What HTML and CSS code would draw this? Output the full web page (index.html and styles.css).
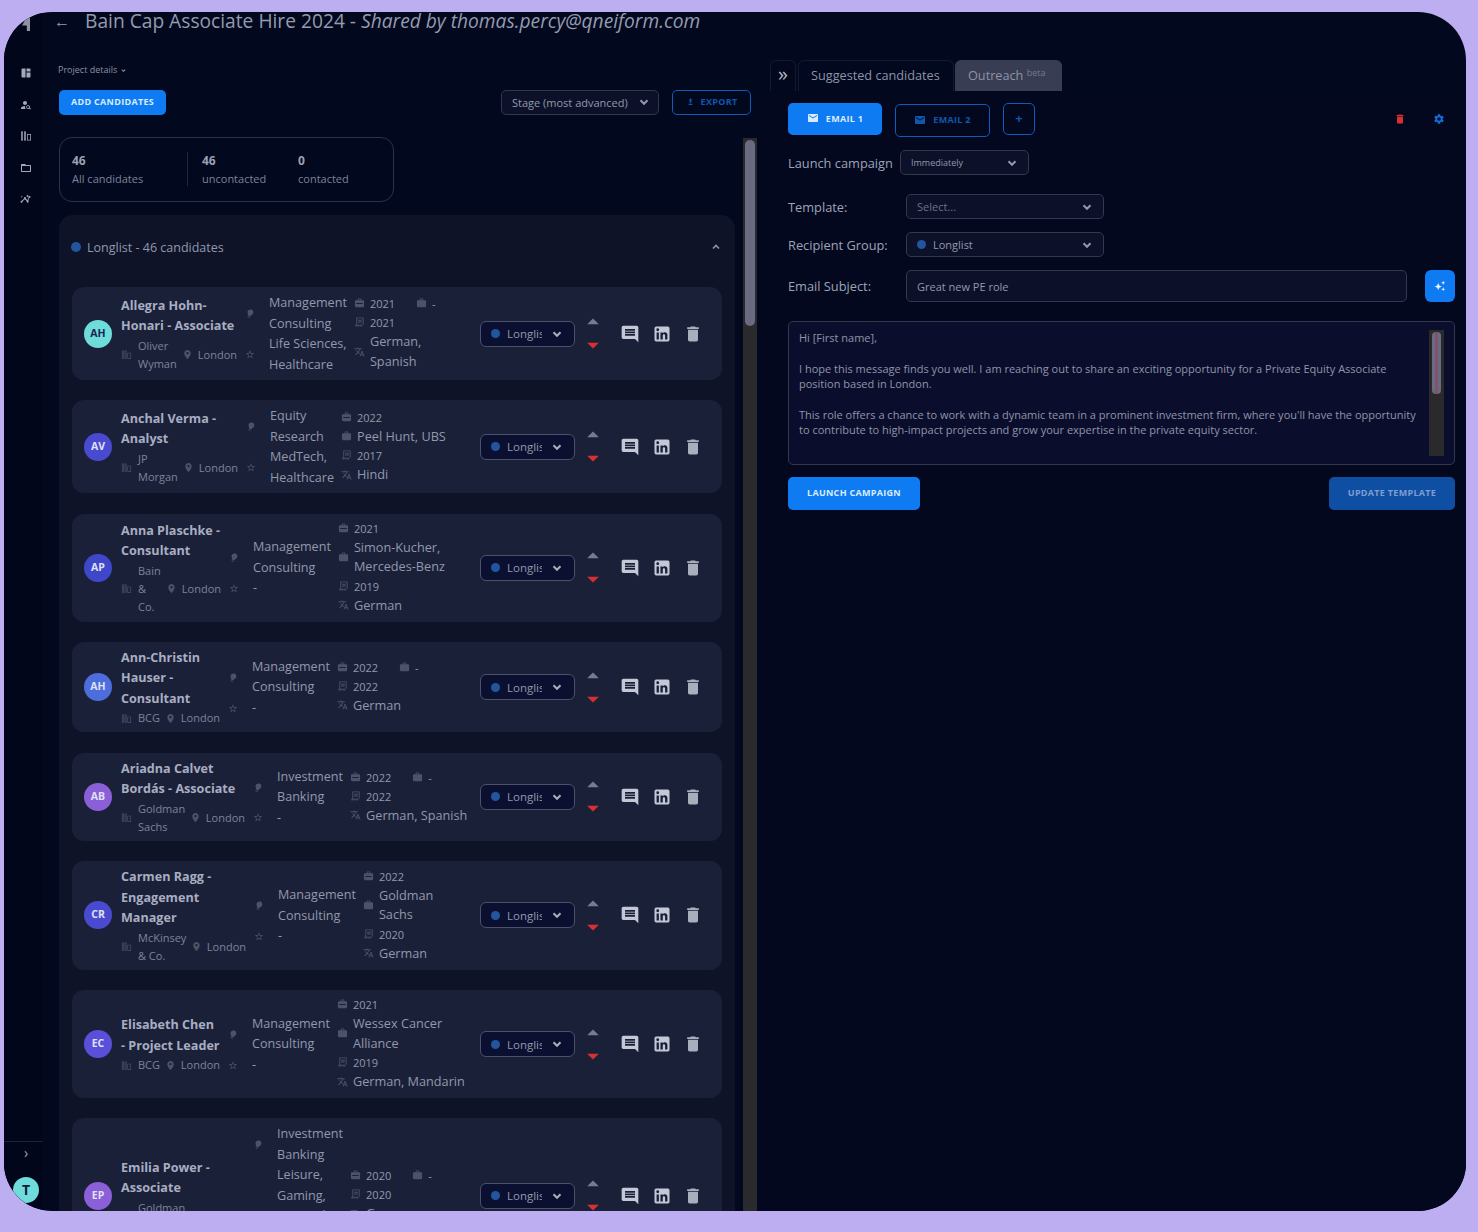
FILE: index.html
```html
<!DOCTYPE html>
<html lang="en">
<head>
<meta charset="utf-8">
<title>Bain Cap Associate Hire 2024</title>
<link rel="stylesheet" href="styles.css">
</head>
<body>
<svg class="defs" aria-hidden="true">
  <symbol id="i-dash" viewBox="0 0 24 24"><path d="M3 5a2 2 0 0 1 2-2h6v18H5a2 2 0 0 1-2-2zM13 3h6a2 2 0 0 1 2 2v4h-8zM13 11h8v8a2 2 0 0 1-2 2h-6z"/></symbol>
  <symbol id="i-person" viewBox="0 0 24 24"><path d="M10 12c2.2 0 4-1.8 4-4s-1.800-4-4-4-4 1.800-4 4 1.800 4 4 4zM10.350 14.010C7.620 13.910 2 15.270 2 18v2h9.540c-2.470-2.760-1.230-5.890-1.190-5.990zM19.430 18.020c.47-.8.7-1.770.52-2.810-.27-1.550-1.570-2.790-3.140-2.950-2.500-.27-4.600 1.830-4.340 4.330.16 1.570 1.400 2.870 2.950 3.140 1.040.18 2.010-.05 2.810-.52L20.590 21 22 19.590l-2.570-2.570zM16 18c-1.100 0-2-.9-2-2s.9-2 2-2 2 .9 2 2-.9 2-2 2z"/></symbol>
  <symbol id="i-org" viewBox="0 0 24 24"><path d="M2 3h4v18H2zM3.500 4.500v15h1v-15zM8 3h4v18H8zM9.500 4.500v15h1v-15zM14 8h8v13h-8zM15.500 9.500v10h5v-10z" fill-rule="evenodd"/></symbol>
  <symbol id="i-folder" viewBox="0 0 24 24"><path d="M20 6h-8l-2-2H4c-1.100 0-2 .9-2 2v12c0 1.100.9 2 2 2h16c1.100 0 2-.9 2-2V8c0-1.100-.9-2-2-2zm0 12H4V8h16v10z"/></symbol>
  <symbol id="i-insight" viewBox="0 0 24 24"><path d="M21 8a2 2 0 1 1-1.500-1.900 2 2 0 0 1 1.500 1.900zM15 14.300 11.700 11a2 2 0 1 0-3.400 0L3.500 15.700a2 2 0 1 0 1.400 1.400L9.700 12.400 13.600 16.300a2 2 0 1 0 3.300-.1L17.900 9.300a2 2 0 0 1-1-1zM15 9l.9-2L18 6l-2.100-1L15 3l-.9 2L12 6l2.100 1zM3.500 10 4 8l2-.5L4 7l-.5-2L3 7 1 7.500 3 8z"/></symbol>
  <symbol id="i-pin" viewBox="0 0 24 24"><path d="M12 2C8.130 2 5 5.130 5 9c0 5.250 7 13 7 13s7-7.750 7-13c0-3.870-3.130-7-7-7zm0 9.500A2.500 2.500 0 1 1 12 6.500a2.500 2.500 0 0 1 0 5z"/></symbol>
  <symbol id="i-star" viewBox="0 0 24 24"><path d="M22 9.240l-7.190-.62L12 2 9.190 8.630 2 9.240l5.460 4.730L5.820 21 12 17.270 18.180 21l-1.630-7.030L22 9.240zM12 15.400l-3.760 2.270 1-4.280-3.320-2.880 4.380-.38L12 6.100l1.710 4.040 4.380.38-3.320 2.880 1 4.280L12 15.400z"/></symbol>
  <symbol id="i-bulb" viewBox="0 0 24 24"><path transform="rotate(20 12 12)" d="M9 21c0 .55.45 1 1 1h4c.55 0 1-.45 1-1v-1H9v1zm3-19C8.140 2 5 5.140 5 9c0 2.380 1.190 4.470 3 5.740V17c0 .55.45 1 1 1h6c.55 0 1-.45 1-1v-2.260c1.810-1.270 3-3.360 3-5.740 0-3.860-3.140-7-7-7z"/></symbol>
  <symbol id="i-case" viewBox="0 0 24 24"><path d="M20 6h-4V4c0-1.110-.89-2-2-2h-4c-1.110 0-2 .89-2 2v2H4c-1.110 0-2 .89-2 2v11c0 1.110.89 2 2 2h16c1.110 0 2-.89 2-2V8c0-1.110-.89-2-2-2zm-6 0h-4V4h4v2zM5 12v2h14v-2z" fill-rule="evenodd"/></symbol>
  <symbol id="i-bag" viewBox="0 0 24 24"><path d="M20 6h-4V4c0-1.110-.89-2-2-2h-4c-1.110 0-2 .89-2 2v2H4c-1.110 0-2 .89-2 2v11c0 1.110.89 2 2 2h16c1.110 0 2-.89 2-2V8c0-1.110-.89-2-2-2zm-6 0h-4V4h4v2z"/></symbol>
  <symbol id="i-doc" viewBox="0 0 24 24"><path d="M5 2h16v16h-3v4H3v-4h2zM7 4v14h9v2H5v1h11v-3h3V4zM9 7h8v2H9zM9 11h8v2H9z" fill-rule="evenodd"/></symbol>
  <symbol id="i-lang" viewBox="0 0 24 24"><path d="M12.870 15.070l-2.540-2.510.03-.03c1.740-1.940 2.980-4.170 3.710-6.530H17V4h-7V2H8v2H1v1.990h11.170C11.500 7.920 10.440 9.750 9 11.350 8.070 10.320 7.300 9.190 6.690 8h-2c.73 1.630 1.730 3.170 2.980 4.560l-5.090 5.020L4 19l5-5 3.110 3.110.76-2.040zM18.500 10h-2L12 22h2l1.120-3h4.750L21 22h2l-4.500-12zm-2.620 7l1.620-4.330L19.120 17h-3.240z"/></symbol>
  <symbol id="i-comment" viewBox="0 0 24 24"><path d="M21.990 4c0-1.100-.89-2-1.990-2H4c-1.100 0-2 .9-2 2v12c0 1.100.9 2 2 2h14l4 4-.01-18zM18 14H6v-2h12v2zm0-3H6V9h12v2zm0-3H6V6h12v2z"/></symbol>
  <symbol id="i-in" viewBox="0 0 24 24"><path d="M19 3a2 2 0 0 1 2 2v14a2 2 0 0 1-2 2H5a2 2 0 0 1-2-2V5a2 2 0 0 1 2-2h14m-.5 15.500v-5.300a3.260 3.260 0 0 0-3.260-3.260c-.85 0-1.840.52-2.320 1.300v-1.110h-2.790v8.370h2.790v-4.930c0-.77.62-1.400 1.390-1.400a1.400 1.400 0 0 1 1.400 1.400v4.930h2.790M6.880 8.560a1.680 1.680 0 0 0 1.680-1.680c0-.93-.75-1.690-1.680-1.690a1.690 1.690 0 0 0-1.690 1.690c0 .93.76 1.680 1.690 1.680m1.390 9.940v-8.370H5.500v8.370h2.770z"/></symbol>
  <symbol id="i-trash" viewBox="0 0 24 24"><path d="M6 19c0 1.100.9 2 2 2h8c1.100 0 2-.9 2-2V7H6v12zM19 4h-3.500l-1-1h-5l-1 1H5v2h14V4z"/></symbol>
  <symbol id="i-mail" viewBox="0 0 24 24"><path d="M20 4H4c-1.100 0-2 .9-2 2v12c0 1.100.9 2 2 2h16c1.100 0 2-.9 2-2V6c0-1.100-.9-2-2-2zm0 4l-8 5-8-5V6l8 5 8-5v2z"/></symbol>
  <symbol id="i-gear" viewBox="0 0 24 24"><path d="M19.140 12.940c.04-.3.06-.61.06-.94 0-.32-.02-.64-.07-.94l2.030-1.580c.18-.14.23-.41.12-.61l-1.920-3.320c-.12-.22-.37-.29-.59-.22l-2.390.96c-.5-.38-1.030-.7-1.620-.94l-.36-2.540c-.04-.24-.24-.41-.48-.41h-3.840c-.24 0-.43.17-.47.41l-.36 2.540c-.59.24-1.130.57-1.620.94l-2.390-.96c-.22-.08-.47 0-.59.22L2.740 8.870c-.12.21-.08.47.12.61l2.030 1.580c-.05.3-.09.63-.09.94s.02.64.07.94l-2.030 1.580c-.18.14-.23.41-.12.61l1.920 3.320c.12.22.37.29.59.22l2.390-.96c.5.38 1.030.7 1.620.94l.36 2.540c.05.24.24.41.48.41h3.840c.24 0 .44-.17.47-.41l.36-2.540c.59-.24 1.130-.56 1.620-.94l2.390.96c.22.08.47 0 .59-.22l1.920-3.320c.12-.22.07-.47-.12-.61l-2.010-1.580zM12 15.600a3.600 3.600 0 1 1 0-7.200 3.600 3.600 0 0 1 0 7.200z"/></symbol>
  <symbol id="i-spark" viewBox="0 0 24 24"><path d="M9 7l1.800 4.200L15 13l-4.200 1.800L9 19l-1.800-4.200L3 13l4.200-1.800zM17.500 3l1 2.500L21 6.500l-2.500 1-1 2.500-1-2.500-2.500-1 2.500-1zM17.500 14l1 2.500 2.500 1-2.500 1-1 2.500-1-2.500-2.500-1 2.500-1z"/></symbol>
  <symbol id="i-upload" viewBox="0 0 24 24"><path d="M12 3l5 6h-3v7h-4V9H7zM7 18h10v3H7z"/></symbol>
  <symbol id="i-chev" viewBox="0 0 24 24"><path d="M6 9l6 6 6-6" fill="none" stroke="currentColor" stroke-width="3.500"/></symbol>
  <symbol id="i-up" viewBox="0 0 24 24"><path d="M12 6l10 10H2z"/></symbol>
  <symbol id="i-down" viewBox="0 0 24 24"><path d="M12 18L2 8h20z"/></symbol>
</svg>

<div class="frame">
  <nav class="rail">
    <div class="rail-logo"></div>
    <ul class="rail-nav">
      <li><svg class="ic12"><use href="#i-dash"/></svg></li>
      <li><svg class="ic12"><use href="#i-person"/></svg></li>
      <li><svg class="ic12"><use href="#i-org"/></svg></li>
      <li><svg class="ic12"><use href="#i-folder"/></svg></li>
      <li><svg class="ic12"><use href="#i-insight"/></svg></li>
    </ul>
    <div class="rail-foot">
      <div class="rail-expand">&#8250;</div>
      <div class="rail-user">T</div>
    </div>
  </nav>

  <div class="main">
    <header class="titlebar">
      <span class="back">&#8592;</span>
      <h1 class="title">Bain Cap Associate Hire 2024 - <em>Shared by thomas.percy@qneiform.com</em></h1>
    </header>

    <div class="columns">
      <section class="left">
        <div class="details-link">Project details <svg class="ic7"><use href="#i-chev"/></svg></div>
        <div class="toolbar">
          <button class="btn btn-solid btn-add">ADD CANDIDATES</button>
          <div class="toolbar-right">
            <div class="sort">Stage (most advanced) <svg class="chev"><use href="#i-chev"/></svg></div>
            <button class="btn btn-outline btn-export"><svg class="ic9"><use href="#i-upload"/></svg> EXPORT</button>
          </div>
        </div>

        <div class="scroller">
          <div class="scroll-body">
            <div class="stats">
              <div class="stat stat-all"><b>46</b><span>All candidates</span></div>
              <div class="stat stat-un"><b>46</b><span>uncontacted</span></div>
              <div class="stat"><b>0</b><span>contacted</span></div>
            </div>

            <div class="group">
              <div class="group-head">
                <span class="dot dot-lg"></span>
                <span class="group-name">Longlist - 46 candidates</span>
                <svg class="chev group-chev"><use href="#i-chev"/></svg>
              </div>

              <article class="card">
                <div class="avatar av-teal">AH</div>
                <div class="who nw-118">
                  <div class="name">Allegra Hohn-Honari - Associate</div>
                  <div class="meta"><svg class="ic11 org"><use href="#i-org"/></svg><span class="company">Oliver Wyman</span><svg class="ic11"><use href="#i-pin"/></svg><span>London</span></div>
                </div>
                <div class="sector">
                  <svg class="ic11"><use href="#i-bulb"/></svg><div class="sector-text">Management Consulting</div>
                  <svg class="ic11"><use href="#i-star"/></svg><div class="sector-text">Life&nbsp;Sciences, Healthcare</div>
                </div>
                <div class="facts facts-narrow">
                  <div class="fact"><svg class="ic11"><use href="#i-case"/></svg><span class="yr">2021</span><svg class="ic11 fact-bag"><use href="#i-bag"/></svg><span class="yr">-</span></div>
                  <div class="fact"><svg class="ic11"><use href="#i-doc"/></svg><span class="yr">2021</span></div>
                  <div class="fact"><svg class="ic11"><use href="#i-lang"/></svg><span>German, Spanish</span></div>
                </div>
                <div class="actions">
                  <div class="stage"><span class="dot"></span><span class="stage-name">Longlist</span><svg class="chev"><use href="#i-chev"/></svg></div>
                  <div class="vote"><svg class="up"><use href="#i-up"/></svg><svg class="down"><use href="#i-down"/></svg></div>
                  <svg class="act act-c"><use href="#i-comment"/></svg>
                  <svg class="act act-l"><use href="#i-in"/></svg>
                  <svg class="act act-t"><use href="#i-trash"/></svg>
                </div>
              </article>

              <article class="card">
                <div class="avatar av-indigo">AV</div>
                <div class="who nw-119">
                  <div class="name">Anchal Verma - Analyst</div>
                  <div class="meta"><svg class="ic11 org"><use href="#i-org"/></svg><span class="company">JP Morgan</span><svg class="ic11"><use href="#i-pin"/></svg><span>London</span></div>
                </div>
                <div class="sector">
                  <svg class="ic11"><use href="#i-bulb"/></svg><div class="sector-text">Equity Research</div>
                  <svg class="ic11"><use href="#i-star"/></svg><div class="sector-text">MedTech, Healthcare</div>
                </div>
                <div class="facts">
                  <div class="fact"><svg class="ic11"><use href="#i-case"/></svg><span class="yr">2022</span></div>
                  <div class="fact"><svg class="ic11"><use href="#i-bag"/></svg><span>Peel Hunt, UBS</span></div>
                  <div class="fact"><svg class="ic11"><use href="#i-doc"/></svg><span class="yr">2017</span></div>
                  <div class="fact"><svg class="ic11"><use href="#i-lang"/></svg><span>Hindi</span></div>
                </div>
                <div class="actions">
                  <div class="stage"><span class="dot"></span><span class="stage-name">Longlist</span><svg class="chev"><use href="#i-chev"/></svg></div>
                  <div class="vote"><svg class="up"><use href="#i-up"/></svg><svg class="down"><use href="#i-down"/></svg></div>
                  <svg class="act act-c"><use href="#i-comment"/></svg>
                  <svg class="act act-l"><use href="#i-in"/></svg>
                  <svg class="act act-t"><use href="#i-trash"/></svg>
                </div>
              </article>

              <article class="card">
                <div class="avatar av-blue">AP</div>
                <div class="who nw-102">
                  <div class="name">Anna Plaschke - Consultant</div>
                  <div class="meta"><svg class="ic11 org"><use href="#i-org"/></svg><span class="company">Bain &amp; Co.</span><svg class="ic11"><use href="#i-pin"/></svg><span>London</span></div>
                </div>
                <div class="sector">
                  <svg class="ic11"><use href="#i-bulb"/></svg><div class="sector-text">Management Consulting</div>
                  <svg class="ic11"><use href="#i-star"/></svg><div class="sector-text">-</div>
                </div>
                <div class="facts">
                  <div class="fact"><svg class="ic11"><use href="#i-case"/></svg><span class="yr">2021</span></div>
                  <div class="fact"><svg class="ic11"><use href="#i-bag"/></svg><span>Simon-Kucher, Mercedes-Benz</span></div>
                  <div class="fact"><svg class="ic11"><use href="#i-doc"/></svg><span class="yr">2019</span></div>
                  <div class="fact"><svg class="ic11"><use href="#i-lang"/></svg><span>German</span></div>
                </div>
                <div class="actions">
                  <div class="stage"><span class="dot"></span><span class="stage-name">Longlist</span><svg class="chev"><use href="#i-chev"/></svg></div>
                  <div class="vote"><svg class="up"><use href="#i-up"/></svg><svg class="down"><use href="#i-down"/></svg></div>
                  <svg class="act act-c"><use href="#i-comment"/></svg>
                  <svg class="act act-l"><use href="#i-in"/></svg>
                  <svg class="act act-t"><use href="#i-trash"/></svg>
                </div>
              </article>

              <article class="card">
                <div class="avatar av-sky">AH</div>
                <div class="who nw-101">
                  <div class="name">Ann-Christin Hauser - Consultant</div>
                  <div class="meta"><svg class="ic11 org"><use href="#i-org"/></svg><span class="company">BCG</span><svg class="ic11"><use href="#i-pin"/></svg><span>London</span></div>
                </div>
                <div class="sector">
                  <svg class="ic11"><use href="#i-bulb"/></svg><div class="sector-text">Management Consulting</div>
                  <svg class="ic11"><use href="#i-star"/></svg><div class="sector-text">-</div>
                </div>
                <div class="facts">
                  <div class="fact"><svg class="ic11"><use href="#i-case"/></svg><span class="yr">2022</span><svg class="ic11 fact-bag"><use href="#i-bag"/></svg><span class="yr">-</span></div>
                  <div class="fact"><svg class="ic11"><use href="#i-doc"/></svg><span class="yr">2022</span></div>
                  <div class="fact"><svg class="ic11"><use href="#i-lang"/></svg><span>German</span></div>
                </div>
                <div class="actions">
                  <div class="stage"><span class="dot"></span><span class="stage-name">Longlist</span><svg class="chev"><use href="#i-chev"/></svg></div>
                  <div class="vote"><svg class="up"><use href="#i-up"/></svg><svg class="down"><use href="#i-down"/></svg></div>
                  <svg class="act act-c"><use href="#i-comment"/></svg>
                  <svg class="act act-l"><use href="#i-in"/></svg>
                  <svg class="act act-t"><use href="#i-trash"/></svg>
                </div>
              </article>

              <article class="card">
                <div class="avatar av-violet">AB</div>
                <div class="who nw-126">
                  <div class="name">Ariadna Calvet Bordás - Associate</div>
                  <div class="meta"><svg class="ic11 org"><use href="#i-org"/></svg><span class="company">Goldman Sachs</span><svg class="ic11"><use href="#i-pin"/></svg><span>London</span></div>
                </div>
                <div class="sector">
                  <svg class="ic11"><use href="#i-bulb"/></svg><div class="sector-text">Investment Banking</div>
                  <svg class="ic11"><use href="#i-star"/></svg><div class="sector-text">-</div>
                </div>
                <div class="facts">
                  <div class="fact"><svg class="ic11"><use href="#i-case"/></svg><span class="yr">2022</span><svg class="ic11 fact-bag"><use href="#i-bag"/></svg><span class="yr">-</span></div>
                  <div class="fact"><svg class="ic11"><use href="#i-doc"/></svg><span class="yr">2022</span></div>
                  <div class="fact"><svg class="ic11"><use href="#i-lang"/></svg><span>German, Spanish</span></div>
                </div>
                <div class="actions">
                  <div class="stage"><span class="dot"></span><span class="stage-name">Longlist</span><svg class="chev"><use href="#i-chev"/></svg></div>
                  <div class="vote"><svg class="up"><use href="#i-up"/></svg><svg class="down"><use href="#i-down"/></svg></div>
                  <svg class="act act-c"><use href="#i-comment"/></svg>
                  <svg class="act act-l"><use href="#i-in"/></svg>
                  <svg class="act act-t"><use href="#i-trash"/></svg>
                </div>
              </article>

              <article class="card">
                <div class="avatar av-indigo">CR</div>
                <div class="who nw-127">
                  <div class="name">Carmen Ragg - Engagement Manager</div>
                  <div class="meta"><svg class="ic11 org"><use href="#i-org"/></svg><span class="company">McKinsey &amp; Co.</span><svg class="ic11"><use href="#i-pin"/></svg><span>London</span></div>
                </div>
                <div class="sector">
                  <svg class="ic11"><use href="#i-bulb"/></svg><div class="sector-text">Management Consulting</div>
                  <svg class="ic11"><use href="#i-star"/></svg><div class="sector-text">-</div>
                </div>
                <div class="facts facts-narrow">
                  <div class="fact"><svg class="ic11"><use href="#i-case"/></svg><span class="yr">2022</span></div>
                  <div class="fact"><svg class="ic11"><use href="#i-bag"/></svg><span>Goldman Sachs</span></div>
                  <div class="fact"><svg class="ic11"><use href="#i-doc"/></svg><span class="yr">2020</span></div>
                  <div class="fact"><svg class="ic11"><use href="#i-lang"/></svg><span>German</span></div>
                </div>
                <div class="actions">
                  <div class="stage"><span class="dot"></span><span class="stage-name">Longlist</span><svg class="chev"><use href="#i-chev"/></svg></div>
                  <div class="vote"><svg class="up"><use href="#i-up"/></svg><svg class="down"><use href="#i-down"/></svg></div>
                  <svg class="act act-c"><use href="#i-comment"/></svg>
                  <svg class="act act-l"><use href="#i-in"/></svg>
                  <svg class="act act-t"><use href="#i-trash"/></svg>
                </div>
              </article>

              <article class="card">
                <div class="avatar av-purple">EC</div>
                <div class="who nw-101">
                  <div class="name">Elisabeth Chen <span class="keep">- Project</span> Leader</div>
                  <div class="meta"><svg class="ic11 org"><use href="#i-org"/></svg><span class="company">BCG</span><svg class="ic11"><use href="#i-pin"/></svg><span>London</span></div>
                </div>
                <div class="sector">
                  <svg class="ic11"><use href="#i-bulb"/></svg><div class="sector-text">Management Consulting</div>
                  <svg class="ic11"><use href="#i-star"/></svg><div class="sector-text">-</div>
                </div>
                <div class="facts">
                  <div class="fact"><svg class="ic11"><use href="#i-case"/></svg><span class="yr">2021</span></div>
                  <div class="fact"><svg class="ic11"><use href="#i-bag"/></svg><span>Wessex Cancer Alliance</span></div>
                  <div class="fact"><svg class="ic11"><use href="#i-doc"/></svg><span class="yr">2019</span></div>
                  <div class="fact"><svg class="ic11"><use href="#i-lang"/></svg><span>German, Mandarin</span></div>
                </div>
                <div class="actions">
                  <div class="stage"><span class="dot"></span><span class="stage-name">Longlist</span><svg class="chev"><use href="#i-chev"/></svg></div>
                  <div class="vote"><svg class="up"><use href="#i-up"/></svg><svg class="down"><use href="#i-down"/></svg></div>
                  <svg class="act act-c"><use href="#i-comment"/></svg>
                  <svg class="act act-l"><use href="#i-in"/></svg>
                  <svg class="act act-t"><use href="#i-trash"/></svg>
                </div>
              </article>

              <article class="card">
                <div class="avatar av-violet">EP</div>
                <div class="who nw-126">
                  <div class="name">Emilia Power - Associate</div>
                  <div class="meta"><svg class="ic11 org"><use href="#i-org"/></svg><span class="company">Goldman Sachs</span><svg class="ic11"><use href="#i-pin"/></svg><span>London</span></div>
                </div>
                <div class="sector">
                  <svg class="ic11"><use href="#i-bulb"/></svg><div class="sector-text">Investment Banking</div>
                  <svg class="ic11"><use href="#i-star"/></svg><div class="sector-text">Leisure, Gaming, Hospitality, Travel, Tourism</div>
                </div>
                <div class="facts">
                  <div class="fact"><svg class="ic11"><use href="#i-case"/></svg><span class="yr">2020</span><svg class="ic11 fact-bag"><use href="#i-bag"/></svg><span class="yr">-</span></div>
                  <div class="fact"><svg class="ic11"><use href="#i-doc"/></svg><span class="yr">2020</span></div>
                  <div class="fact"><svg class="ic11"><use href="#i-lang"/></svg><span>German</span></div>
                </div>
                <div class="actions">
                  <div class="stage"><span class="dot"></span><span class="stage-name">Longlist</span><svg class="chev"><use href="#i-chev"/></svg></div>
                  <div class="vote"><svg class="up"><use href="#i-up"/></svg><svg class="down"><use href="#i-down"/></svg></div>
                  <svg class="act act-c"><use href="#i-comment"/></svg>
                  <svg class="act act-l"><use href="#i-in"/></svg>
                  <svg class="act act-t"><use href="#i-trash"/></svg>
                </div>
              </article>
            </div>
          </div>
          <div class="scrollbar"><div class="thumb"></div></div>
        </div>
      </section>

      <section class="right">
        <div class="tabs">
          <div class="tab tab-toggle">&#187;</div>
          <div class="tab tab-suggested">Suggested candidates</div>
          <div class="tab tab-outreach">Outreach <sup>beta</sup></div>
        </div>
        <div class="panel">
          <div class="email-bar">
            <button class="btn btn-solid btn-email"><svg class="ic12"><use href="#i-mail"/></svg> EMAIL 1</button>
            <button class="btn btn-outline btn-email2"><svg class="ic12"><use href="#i-mail"/></svg> EMAIL 2</button>
            <button class="btn btn-outline btn-plus">+</button>
            <svg class="tool tool-del"><use href="#i-trash"/></svg>
            <svg class="tool tool-gear"><use href="#i-gear"/></svg>
          </div>
          <div class="launch-row">
            <label class="launch-label">Launch campaign</label>
            <div class="field field-launch"><span>Immediately</span><svg class="chev"><use href="#i-chev"/></svg></div>
          </div>
          <div class="form-row">
            <label class="form-label">Template:</label>
            <div class="field field-wide field-muted"><span>Select...</span><svg class="chev"><use href="#i-chev"/></svg></div>
          </div>
          <div class="form-row">
            <label class="form-label">Recipient Group:</label>
            <div class="field field-wide"><span class="field-group"><span class="dot"></span>Longlist</span><svg class="chev"><use href="#i-chev"/></svg></div>
          </div>
          <div class="form-row subject-row">
            <label class="form-label">Email Subject:</label>
            <div class="subject">Great new PE role</div>
            <button class="spark"><svg class="ic14"><use href="#i-spark"/></svg></button>
          </div>
          <div class="editor">
            <div class="editor-text">
              <p>Hi [First name],</p>
              <p>I hope this message finds you well. I am reaching out to share an exciting opportunity for a Private Equity Associate position based in London.</p>
              <p>This role offers a chance to work with a dynamic team in a prominent investment firm, where you'll have the opportunity to contribute to high-impact projects and grow your expertise in the private equity sector.</p>
            </div>
            <div class="editor-scroll"><div class="editor-thumb"></div></div>
          </div>
          <div class="panel-actions">
            <button class="btn btn-solid btn-launch">LAUNCH CAMPAIGN</button>
            <button class="btn btn-update">UPDATE TEMPLATE</button>
          </div>
        </div>
      </section>
    </div>
  </div>
</div>
</body>
</html>
```

FILE: styles.css
```css
* { box-sizing: border-box; }
html, body { margin: 0; padding: 0; }
body {
  width: 1478px;
  height: 1232px;
  overflow: hidden;
  background: #bcaef0;
  font-family: "Open Sans", "Noto Sans", sans-serif;
  color: #a3a9bc;
  padding: 12px 12px 21px 4px;
}
.defs { width: 0; height: 0; position: absolute; }
svg { fill: currentColor; flex: none; display: block; }
button { font-family: inherit; cursor: pointer; }
h1, p, ul { margin: 0; padding: 0; }
ul { list-style: none; }

.ic7 { width: 7px; height: 7px; display: inline-block; }
.ic9 { width: 9px; height: 9px; }
.ic11 { width: 11px; height: 11px; }
.ic12 { width: 12px; height: 12px; }
.ic14 { width: 14px; height: 14px; }
.chev { width: 14px; height: 14px; }

.frame {
  height: 1199px;
  width: 1462px;
  border-radius: 48px;
  overflow: hidden;
  background: #02081e;
  display: flex;
}

/* left rail */
.rail {
  width: 39px;
  flex: none;
  background: #01061a;
  display: flex;
  flex-direction: column;
  align-items: center;
  padding-left: 5px;
}
.rail-logo {
  width: 8px;
  height: 14px;
  margin-top: 5px;
  background: #8d91a0;
  clip-path: polygon(60% 0, 100% 0, 100% 100%, 60% 100%, 60% 60%, 0 60%);
}
.rail-nav {
  margin-top: 36px;
  display: flex;
  flex-direction: column;
  gap: 19.500px;
  color: #a4a9ba;
}
.rail-foot {
  margin-top: auto;
  width: 100%;
  display: flex;
  flex-direction: column;
  align-items: center;
}
.rail-expand {
  align-self: stretch;
  margin-left: -5px;
  padding-left: 5px;
  border-top: 1px solid #1d2236;
  text-align: center;
  font-size: 14px;
  line-height: 22px;
  color: #a3a9bc;
  height: 36px;
}
.rail-user {
  width: 26px;
  height: 26px;
  border-radius: 50%;
  background: #6fdcdc;
  color: #121a3a;
  font-size: 14px;
  font-weight: 700;
  line-height: 26px;
  text-align: center;
  margin-bottom: 8px;
}

.main {
  flex: 1;
  min-width: 0;
  display: flex;
  flex-direction: column;
}

.titlebar {
  height: 18px;
  display: flex;
  align-items: center;
  padding-left: 11px;
  color: #959bae;
}
.back { font-size: 16px; width: 31px; }
.title {
  font-size: 19.200px;
  font-weight: 400;
  line-height: 18px;
  white-space: nowrap;
  color: #959bae;
}

.columns { flex: 1; min-height: 0; display: flex; }

/* left column */
.left {
  width: 714px;
  flex: none;
  display: flex;
  flex-direction: column;
  padding-top: 34px;
}
.details-link {
  font-size: 9px;
  line-height: 12px;
  margin-left: 15px;
  color: #8b91a6;
  display: flex;
  align-items: center;
  gap: 3px;
}
.toolbar {
  margin-top: 14px;
  display: flex;
  justify-content: space-between;
  padding: 0 6px 0 16px;
}
.toolbar-right { display: flex; gap: 13px; }

.btn {
  border-radius: 5px;
  font-weight: 700;
  font-size: 9px;
  letter-spacing: .3px;
  display: flex;
  align-items: center;
  justify-content: center;
  padding: 0 0 2px;
  border: 1px solid transparent;
}
.btn-solid { background: #0f7bf2; color: #d8ecff; }
.btn-outline { background: transparent; border: 1.500px solid #0f5cba; color: #0f58ad; }
.btn-add { width: 107px; height: 25px; }
.btn-export { width: 79px; height: 25px; gap: 6px; }
.sort {
  width: 158px;
  height: 25px;
  border: 1px solid #33384f;
  border-radius: 5px;
  background: #0c1129;
  color: #9298ac;
  font-size: 11px;
  display: flex;
  align-items: center;
  justify-content: space-between;
  padding: 0 7px 1px 10px;
}

.scroller {
  margin-top: 22px;
  flex: 1;
  min-height: 0;
  display: flex;
  overflow: hidden;
  padding-left: 16px;
}
.scroll-body { width: 676px; flex: none; }
.scrollbar {
  width: 14px;
  margin-left: 8px;
  margin-top: 1px;
  background: #2a2a2c;
  padding: 2px 2px 0;
  flex: none;
}
.thumb {
  height: 186px;
  border-radius: 5px;
  background: linear-gradient(90deg, #676c83 40%, #77617a 50%, #676c83 60%);
}

.stats {
  width: 335px;
  height: 65px;
  border: 1px solid #2d3249;
  border-radius: 13px;
  display: flex;
  align-items: center;
  padding: 0 0 1px 12px;
}
.stat { display: flex; flex-direction: column; height: 34px; }
.stat b { font-size: 12px; line-height: 18px; color: #9aa0b3; }
.stat span { font-size: 11px; line-height: 17px; color: #7d8398; }
.stat-all { width: 116px; position: relative; margin-right: 14px; }
.stat-all::after {
  content: "";
  position: absolute;
  right: 0;
  top: 0;
  bottom: 0;
  width: 1px;
  background: #22273c;
}
.stat-un { width: 96px; }

.group {
  margin-top: 13px;
  background: #0e1328;
  border-radius: 14px;
  padding: 0 13px;
}
.group-head {
  height: 72px;
  display: flex;
  align-items: center;
  padding-bottom: 8px;
}
.dot { width: 9px; height: 9px; border-radius: 50%; background: #23559f; display: inline-block; flex: none; }
.dot-lg { width: 10px; height: 10px; margin-left: -1px; margin-right: 6px; }
.group-name { font-size: 12.500px; color: #9298ac; }
.group-chev { margin-left: auto; transform: rotate(180deg); color: #8b91a6; width: 12px; height: 12px; }

.card {
  background: #1b2039;
  border-radius: 12px;
  padding: 6px 0 5px 12px;
  margin-bottom: 20.400px;
  display: flex;
  align-items: center;
}
.avatar {
  width: 28px;
  height: 28px;
  border-radius: 50%;
  flex: none;
  font-size: 10.500px;
  font-weight: 700;
  text-align: center;
  line-height: 27px;
  color: #dfe1f5;
  margin: -1px 9px 0 0;
}
.av-teal { background: #6fdcdc; color: #1a2450; }
.av-indigo { background: #4a4ad0; }
.av-blue { background: #3f47c9; }
.av-sky { background: #4d6ddd; }
.av-violet { background: #8a5fd8; }
.av-purple { background: #5a4fd8; }

.who { flex: none; margin-right: 6px; }
.nw-118 { width: 118px; }
.nw-119 { width: 119px; }
.nw-102 { width: 102px; }
.nw-101 { width: 101px; }
.nw-126 { width: 126px; }
.nw-127 { width: 127px; }
.name { font-size: 12.600px; font-weight: 700; line-height: 20.500px; color: #a8aec1; }
.keep { white-space: nowrap; }
.meta {
  display: flex;
  align-items: center;
  gap: 5px;
  margin-right: 2px;
  font-size: 11px;
  line-height: 18px;
  color: #7d8398;
}
.meta svg { color: #4c5269; }
.meta .org { margin-right: 1px; }
.company { min-width: 0; }

.sector {
  display: grid;
  grid-template-columns: 10px min-content;
  column-gap: 14px;
  align-items: center;
  flex: none;
  margin-right: 7px;
}
.sector svg { width: 10px; height: 11px; color: #4c5269; }
.sector-text { font-size: 12.600px; line-height: 20.500px; color: #9298ac; width: min-content; }

.facts {
  flex: 1;
  min-width: 0;
  margin-right: 10px;
  display: flex;
  flex-direction: column;
  transform: translateY(-1.500px);
}
.facts-narrow { flex: none; width: 85px; margin-right: auto; }
.fact {
  display: flex;
  align-items: center;
  gap: 5px;
  font-size: 12.700px;
  line-height: 19.600px;
  color: #9298ac;
}
.fact svg { color: #4c5269; }
.yr { font-size: 11px; line-height: 19px; }
.fact-bag { margin-left: 16px; }

.actions {
  flex: none;
  display: flex;
  align-items: center;
  width: 242px;
  margin-left: auto;
  margin-top: -1px;
}
.stage {
  width: 95px;
  height: 26px;
  border: 1px solid #4b5169;
  border-radius: 6px;
  background: #0b1030;
  display: flex;
  align-items: center;
  padding: 0 10px;
  color: #9298ac;
}
.stage-name {
  font-size: 11.500px;
  width: 39px;
  margin-left: 7px;
  overflow: hidden;
  white-space: nowrap;
  margin-right: 8px;
}
.stage svg { color: #a9aebd; }
.vote {
  width: 20px;
  margin: 0 17px 0 8px;
  height: 37px;
  display: flex;
  flex-direction: column;
  justify-content: space-between;
  align-items: center;
}
.up { width: 14px; height: 14px; color: #757b90; }
.down { width: 14px; height: 14px; color: #d9302f; }
.act { width: 20px; height: 20px; color: #c4c8d6; }
.act-l { margin-left: 12px; width: 20px; }
.act-t { margin-left: 11px; width: 20px; color: #a9aebd; }

/* right panel */
.right {
  flex: 1;
  min-width: 0;
  display: flex;
  flex-direction: column;
  padding-top: 30px;
}
.tabs { height: 31px; display: flex; padding-left: 13px; gap: 2px; }
.tab {
  border: 1px solid #141a30;
  border-bottom: 0;
  border-radius: 6px 6px 0 0;
  font-size: 12.700px;
  line-height: 29px;
  color: #8e94a8;
  padding: 0;
}
.tab-toggle { width: 26px; font-size: 20px; line-height: 26px; color: #b2b7c6; text-align: center; }
.tab-suggested { width: 156px; padding-left: 12px; }
.tab-outreach { width: 107px; background: #383d53; border-color: #383d53; margin-left: -1px; color: #8d93a6; padding-left: 12px; }
.tab-outreach sup { font-size: 9px; line-height: 0; color: #757b90; vertical-align: 4px; }

.panel {
  flex: 1;
  background: #03081f;
  padding: 12px 11px 0 31px;
}
.email-bar { display: flex; align-items: center; height: 34px; }
.btn-email { width: 94px; height: 32px; gap: 7px; align-self: flex-start; }
.btn-email2 { width: 95px; height: 33px; margin-left: 13px; gap: 7px; align-self: flex-end; }
.btn-plus { width: 32px; height: 32px; margin-left: 13px; font-size: 13px; align-self: flex-start; }
.tool { width: 12px; height: 12px; }
.tool-del { margin-left: auto; color: #d9302f; margin-right: 27px; margin-top: -2px; }
.tool-gear { color: #0f6fdc; margin-right: 10px; margin-top: -2px; }

.launch-row { display: flex; align-items: center; margin-top: 13px; height: 25px; }
.launch-label { font-size: 12.800px; color: #9ea4b7; width: 112px; }
.field {
  height: 25px;
  border: 1px solid #33384f;
  border-radius: 5px;
  background: #0c1129;
  display: flex;
  align-items: center;
  justify-content: space-between;
  font-size: 11px;
  color: #9298ac;
  padding: 0 9px 0 10px;
}
.field-launch { width: 129px; font-size: 9px; }
.field-wide { width: 198px; }
.field-muted span { color: #6c7287; }
.field-group { display: flex; align-items: center; gap: 7px; }
.form-row { display: flex; align-items: center; margin-top: 13px; }
.launch-row + .form-row { margin-top: 19px; }
.form-label { width: 118px; font-size: 12.800px; color: #9ea4b7; }
.subject-row { margin-top: 13px; align-items: stretch; height: 32px; }
.subject-row .form-label { align-self: center; }
.subject {
  width: 501px;
  border: 1px solid #33384f;
  border-radius: 5px;
  background: #0c1129;
  font-size: 11px;
  line-height: 32px;
  padding-left: 10px;
  color: #9298ac;
}
.spark {
  width: 30px;
  margin-left: 18px;
  border: 0;
  padding: 0;
  border-radius: 6px;
  background: #0f7bf2;
  color: #e6f2ff;
  display: flex;
  align-items: center;
  justify-content: center;
}
.editor {
  margin-top: 19px;
  height: 144px;
  border: 1px solid #33384f;
  border-radius: 5px;
  background: #0a0e2c;
  display: flex;
  justify-content: space-between;
  padding: 8px 10px 8px 10px;
}
.editor-text { width: 622px; font-size: 11px; line-height: 15.400px; color: #8f95a9; }
.editor-text p { margin-bottom: 15.400px; }
.editor-scroll { width: 15px; background: #2a2a2c; padding: 2px 3px; }
.editor-thumb {
  height: 62px;
  border-radius: 4px;
  background: linear-gradient(90deg, #676c83 25%, #8a4a62 50%, #676c83 75%);
}
.panel-actions { margin-top: 12px; display: flex; justify-content: space-between; }
.btn-launch { width: 132px; height: 33px; }
.btn-update { width: 126px; height: 33px; background: #0f4fa3; color: #7f9ed0; }
```
